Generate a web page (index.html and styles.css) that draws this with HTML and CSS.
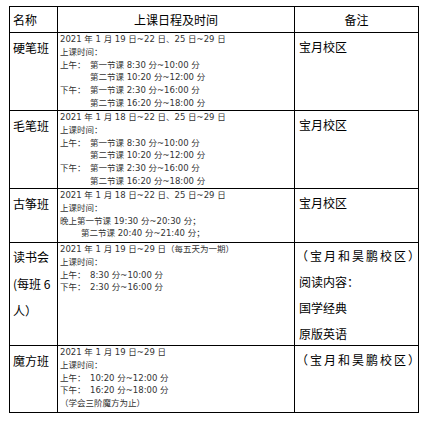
FILE: index.html
```html
<!DOCTYPE html>
<html lang="zh-CN">
<head>
<meta charset="utf-8">
<title>课程安排</title>
<link rel="stylesheet" href="styles.css">
</head>
<body>
<div class="page">
  <div class="sheet">
    <div class="cell head name-h">名称</div>
    <div class="cell head center">上课日程及时间</div>
    <div class="cell head center">备注</div>

    <div class="cell name">硬笔班</div>
    <div class="cell sched">
      <div>2021 年 1 月 19 日~22 日、25 日~29 日</div>
      <div>上课时间：</div>
      <div><span class="lbl">上午：</span>第一节课 8:30 分~10:00 分</div>
      <div class="ind">第二节课 10:20 分~12:00 分</div>
      <div><span class="lbl">下午：</span>第一节课 2:30 分~16:00 分</div>
      <div class="ind">第二节课 16:20 分~18:00 分</div>
    </div>
    <div class="cell note"><div>宝月校区</div></div>

    <div class="cell name">毛笔班</div>
    <div class="cell sched">
      <div>2021 年 1 月 18 日~22 日、25 日~29 日</div>
      <div>上课时间：</div>
      <div><span class="lbl">上午：</span>第一节课 8:30 分~10:00 分</div>
      <div class="ind">第二节课 10:20 分~12:00 分</div>
      <div><span class="lbl">下午：</span>第一节课 2:30 分~16:00 分</div>
      <div class="ind">第二节课 16:20 分~18:00 分</div>
    </div>
    <div class="cell note"><div>宝月校区</div></div>

    <div class="cell name">古筝班</div>
    <div class="cell sched">
      <div>2021 年 1 月 18 日~22 日、25 日~29 日</div>
      <div>上课时间：</div>
      <div>晚上第一节课 19:30 分~20:30 分；</div>
      <div class="ind2">第二节课 20:40 分~21:40 分；</div>
    </div>
    <div class="cell note"><div>宝月校区</div></div>

    <div class="cell name tall">读书会<br>(每班 6<br>人）</div>
    <div class="cell sched">
      <div>2021 年 1 月 19 日~29 日（每五天为一期）</div>
      <div>上课时间：</div>
      <div><span class="lbl">上午：</span>8:30 分~10:00 分</div>
      <div><span class="lbl">下午：</span>2:30 分~16:00 分</div>
    </div>
    <div class="cell note tall">
      <div class="paren">（宝月和昊鹏校区）</div>
      <div>阅读内容：</div>
      <div>国学经典</div>
      <div>原版英语</div>
    </div>

    <div class="cell name">魔方班</div>
    <div class="cell sched">
      <div>2021 年 1 月 19 日~29 日</div>
      <div>上课时间：</div>
      <div><span class="lbl">上午：</span>10:20 分~12:00 分</div>
      <div><span class="lbl">下午：</span>16:20 分~18:00 分</div>
      <div>（学会三阶魔方为止）</div>
    </div>
    <div class="cell note"><div class="paren">（宝月和昊鹏校区）</div></div>
  </div>
</div>
</body>
</html>
```

FILE: styles.css
```css
html, body {
  margin: 0;
  padding: 0;
  background: #fff;
}

.page {
  padding: 6px 0 0 9px;
}

.sheet {
  display: grid;
  grid-template-columns: 48px 237px 124px;
  grid-template-rows: 26px 78px 78px 54px 103px 67px;
  width: 410px;
  box-sizing: border-box;
  border-left: 1px solid #000;
  border-top: 1px solid #000;
  font-family: "Noto Sans CJK SC", sans-serif;
  color: #000;
}

.cell {
  box-sizing: border-box;
  border-right: 1px solid #000;
  border-bottom: 1px solid #000;
  white-space: nowrap;
}

.head {
  font-size: 12px;
  line-height: 25px;
}

.name-h {
  padding-left: 3px;
}

.center {
  text-align: center;
}

.name {
  font-size: 12px;
  line-height: 27px;
  padding: 1px 0 0 3px;
}

.name.tall {
  padding-top: 0;
}

.sched {
  font-family: "DejaVu Sans", "Noto Sans CJK SC", sans-serif;
  font-size: 8.5px;
  line-height: 12.8px;
  padding-left: 2px;
  color: #333;
}

.lbl {
  display: inline-block;
  width: 30px;
}

.ind {
  padding-left: 30px;
}

.ind2 {
  padding-left: 21px;
}

.note {
  font-size: 12px;
  line-height: 26px;
  padding: 1px 0 0 4px;
}

.note.tall {
  padding-top: 0;
}

.paren {
  letter-spacing: 2px;
  margin-left: -3px;
}
```
